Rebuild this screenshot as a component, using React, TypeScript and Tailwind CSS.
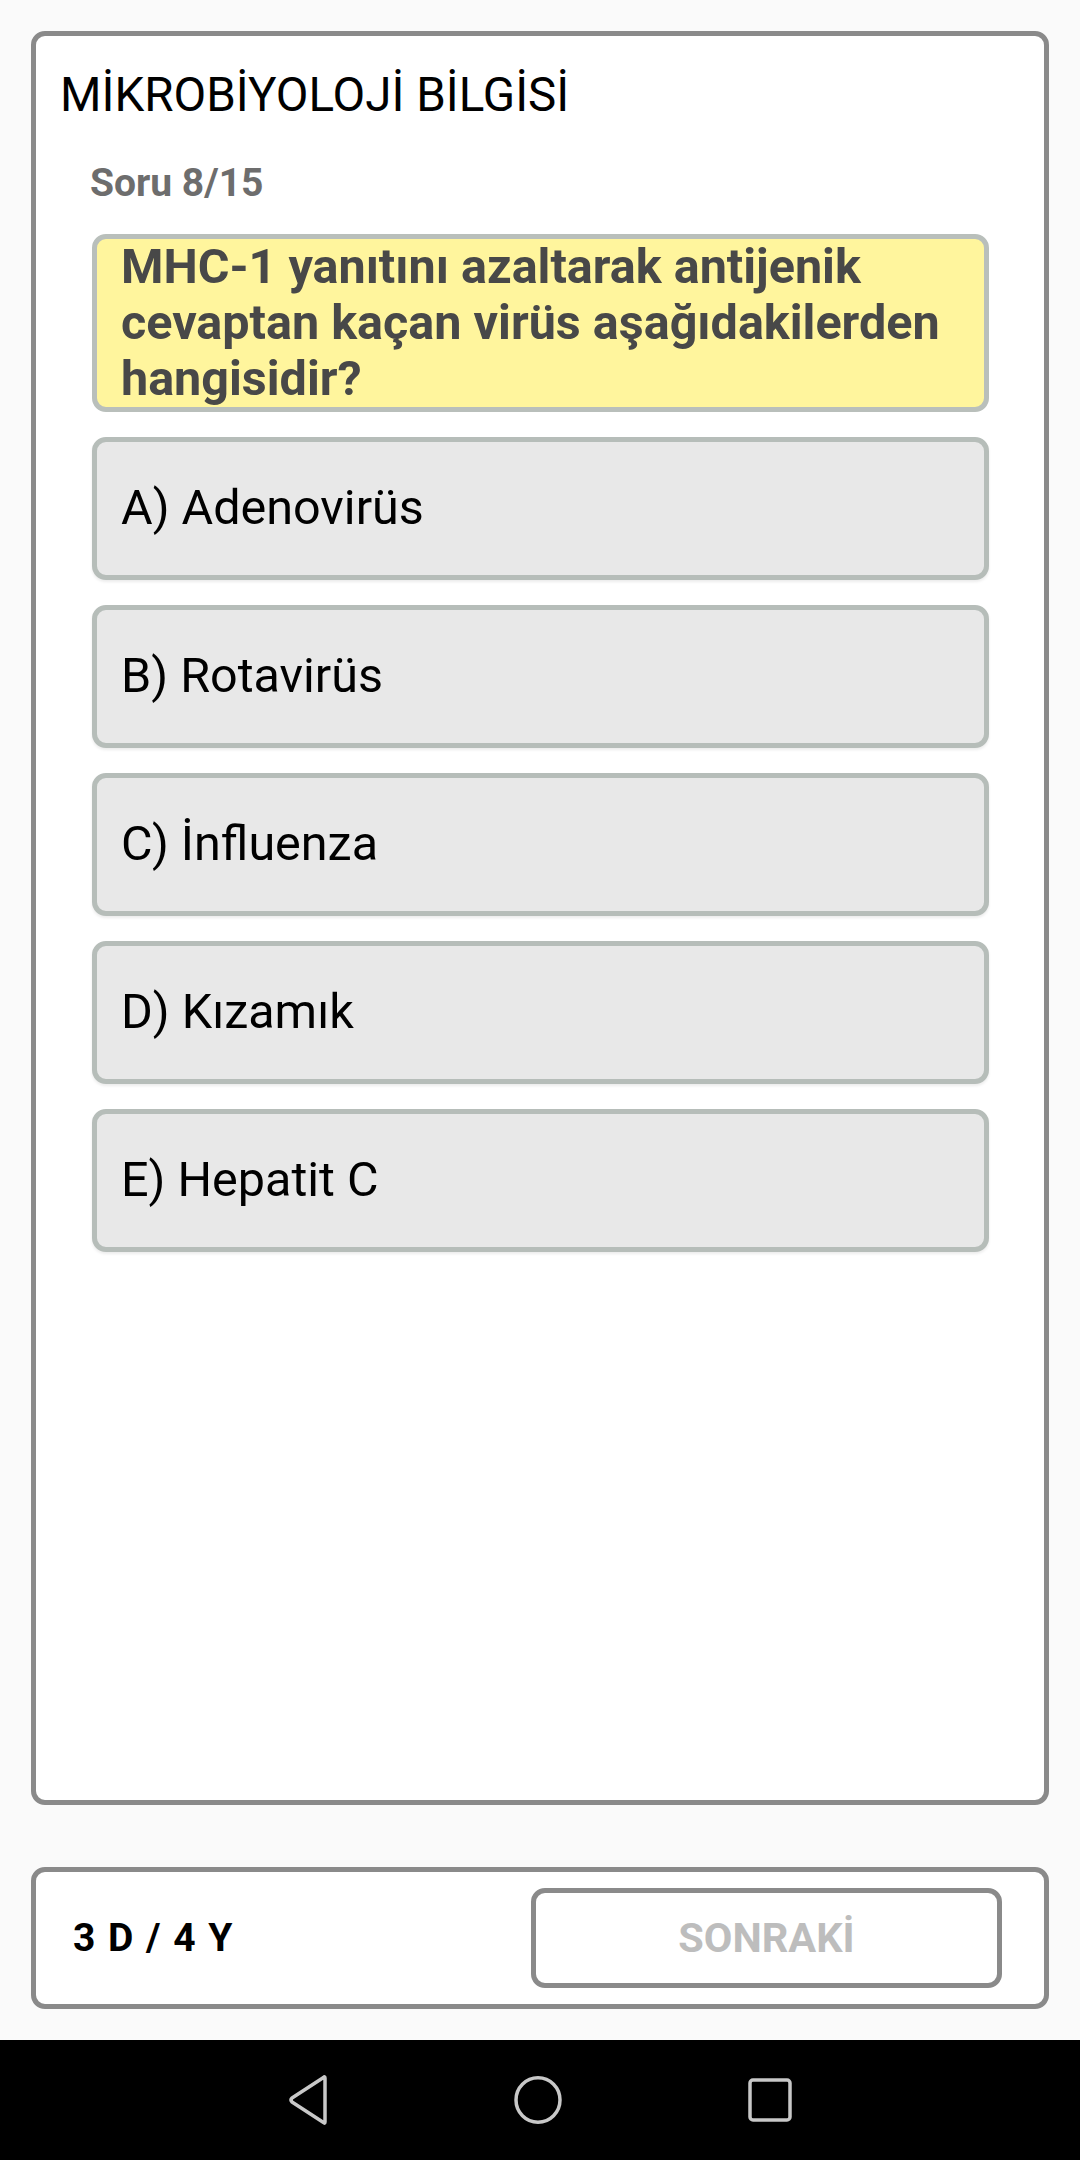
import React from 'react';

const options = ['A) Adenovirüs', 'B) Rotavirüs', 'C) İnfluenza', 'D) Kızamık', 'E) Hepatit C'];

export default function App() {
    return (
        <div className="w-[1080px] h-[2160px] bg-[#fafafa] flex flex-col" style={{ fontFamily: 'Roboto, "Noto Sans", sans-serif' }}>
            <div className="flex-1 flex flex-col px-[31px] pt-[31px] pb-[31px]">
                {/* Quiz card */}
                <div className="flex-1 bg-white border-[5px] border-[#8a8a8a] rounded-[14px] pt-[32px] flex flex-col">
                    <h1 className="pl-[24px] text-[47.5px] leading-[55px] text-black font-normal">MİKROBİYOLOJİ BİLGİSİ</h1>
                    <p className="mt-[37px] pl-[54px] text-[39px] leading-[46px] font-bold text-[#6d6d6d]">Soru 8/15</p>

                    <div className="mt-[28px] ml-[56px] mr-[55px] flex flex-col gap-[25px]">
                        <div className="bg-[#fff59d] border-[5px] border-[#b9bfbb] rounded-[14px] px-[24px] text-[48.5px] leading-[56px] font-bold text-[#484848]">
                            MHC-1 yanıtını azaltarak antijenik cevaptan kaçan virüs aşağıdakilerden hangisidir?
                        </div>
                        {options.map((opt) => (
                            <div
                                key={opt}
                                className="h-[143px] bg-[#e8e8e8] border-[5px] border-[#b6bdb9] rounded-[14px] px-[24px] flex items-center text-[48.5px] text-black shadow-[0_2px_3px_rgba(0,0,0,0.08)]"
                            >
                                {opt}
                            </div>
                        ))}
                    </div>
                </div>

                {/* Bottom bar */}
                <div className="mt-[62px] h-[142px] bg-white border-[5px] border-[#8a8a8a] rounded-[14px] flex items-center justify-between pl-[37px] pr-[42px]">
                    <span className="text-[39px] font-bold text-black tracking-[1.5px]">3 D / 4 Y</span>
                    <button className="w-[471px] h-[100px] border-[5px] border-[#8a8a8a] rounded-[14px] flex items-center justify-center text-[41.5px] font-bold text-[#bdbdbd]">
                        SONRAKİ
                    </button>
                </div>
            </div>

            {/* Android nav bar */}
            <div className="h-[120px] bg-black flex items-center justify-center gap-[186px]">
                <svg width="40" height="50" viewBox="0 0 40 50" fill="none" stroke="#c8c8c8" strokeWidth="3.5" strokeLinejoin="round">
                    <path d="M37 3 L37 47 Q37 49 35.5 47.5 L4 27 Q2 25 4 23 L35.5 2.5 Q37 1 37 3 Z" />
                </svg>
                <svg width="48" height="48" viewBox="0 0 48 48" fill="none" stroke="#c8c8c8" strokeWidth="3.5">
                    <ellipse cx="24" cy="24" rx="22" ry="22.2" />
                </svg>
                <svg width="44" height="44" viewBox="0 0 44 44" fill="none" stroke="#c8c8c8" strokeWidth="3.5">
                    <rect x="2" y="2" width="40" height="40" rx="3" />
                </svg>
            </div>
        </div>
    );
}
